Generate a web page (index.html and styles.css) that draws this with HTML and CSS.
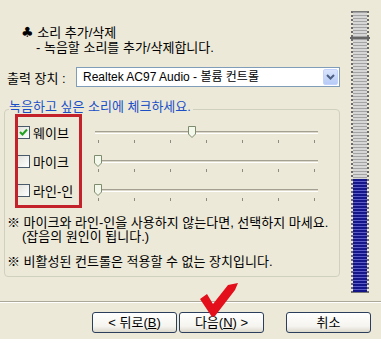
FILE: index.html
```html
<!DOCTYPE html>
<html lang="ko">
<head>
  <meta charset="utf-8" />
  <title>소리 추가/삭제</title>
  <link rel="stylesheet" href="styles.css">
</head>
<body>
  <div class="wizard">
    <div class="main">
      <div class="content">
        <div class="heading">
          <p class="title"><span class="club">♣</span> 소리 추가/삭제</p>
          <p class="subtitle">- 녹음할 소리를 추가/삭제합니다.</p>
        </div>
        <div class="device-row">
          <span class="device-label">출력 장치 :</span>
          <div class="combo">
            <span class="combo-text">Realtek AC97 Audio - 볼륨 컨트롤</span>
            <span class="combo-btn">
              <svg width="9" height="6" viewBox="0 0 9 6"><path d="M1 1 L4.5 4.5 L8 1" fill="none" stroke="#4d6185" stroke-width="2"/></svg>
            </span>
          </div>
        </div>
        <fieldset class="group">
          <legend>녹음하고 싶은 소리에 체크하세요.</legend>
          <div class="sources">
            <div class="source">
              <label class="check">
                <span class="box"><svg width="11" height="11" viewBox="0 0 11 11"><path d="M2 5 L4.5 7.5 L9 2.5" fill="none" stroke="#21a121" stroke-width="2"/></svg></span>웨이브
              </label>
              <div class="slider"><span class="thumb" style="--pos: 0.435"><svg width="8" height="12" viewBox="0 0 8 12"><path d="M0.5 0.5 H7.5 V8 L4 11.5 L0.5 8 Z" fill="#f3f7ec" stroke="#7d8c6c"/></svg></span></div>
            </div>
            <div class="source">
              <label class="check"><span class="box"></span>마이크</label>
              <div class="slider"><span class="thumb" style="--pos: 0"><svg width="8" height="12" viewBox="0 0 8 12"><path d="M0.5 0.5 H7.5 V8 L4 11.5 L0.5 8 Z" fill="#f3f7ec" stroke="#7d8c6c"/></svg></span></div>
            </div>
            <div class="source">
              <label class="check"><span class="box"></span>라인-인</label>
              <div class="slider"><span class="thumb" style="--pos: 0"><svg width="8" height="12" viewBox="0 0 8 12"><path d="M0.5 0.5 H7.5 V8 L4 11.5 L0.5 8 Z" fill="#f3f7ec" stroke="#7d8c6c"/></svg></span></div>
            </div>
            <div class="highlight"></div>
          </div>
          <p class="note">※ 마이크와 라인-인을 사용하지 않는다면, 선택하지 마세요.</p>
          <p class="note indent">(잡음의 원인이 됩니다.)</p>
          <p class="note spaced">※ 비활성된 컨트롤은 적용할 수 없는 장치입니다.</p>
        </fieldset>
      </div>
      <div class="meter">
        <div class="meter-empty"></div>
        <div class="meter-fill"></div>
        <span class="meter-mark"></span>
      </div>
    </div>
    <div class="buttons">
      <button class="btn back">&lt; 뒤로(<u>B</u>)</button>
      <button class="btn next">다음(<u>N</u>) &gt;</button>
      <button class="btn">취소</button>
      <svg class="check-mark" width="40" height="36" viewBox="0 0 40 36"><path d="M1 17 L8 12 L14 22 L29 3 L39 1 L36 8 L16 34 L13 35 Z" fill="#e3101c"/></svg>
    </div>
  </div>
</body>
</html>
```

FILE: styles.css
```css
body {
  margin: 0;
  background-color: #fff;
  font-family: "Liberation Sans", "Noto Sans CJK KR", sans-serif;
  font-size: 13px;
  color: #000;
}
p {
  margin: 0;
}
.wizard {
  width: 381px;
  height: 339px;
  background-color: #ece9d8;
  position: relative;
}
.main {
  display: flex;
  height: 301px;
  border-bottom: 1px solid #aca899;
  box-shadow: 0 1px 0 #fff;
}
.content {
  width: 351px;
}
.heading {
  padding-top: 25px;
  line-height: 15px;
}
.title {
  padding-left: 21px;
}
.club {
  font-family: "DejaVu Sans", sans-serif;
  font-size: 14px;
}
.subtitle {
  padding-left: 36px;
}
.device-row {
  display: flex;
  align-items: center;
  margin-top: 12px;
  padding-left: 7px;
}
.device-label {
  width: 69px;
}
.combo {
  display: flex;
  align-items: center;
  justify-content: space-between;
  box-sizing: border-box;
  width: 264px;
  height: 20px;
  padding: 1px;
  border: 1px solid #7f9db9;
  background-color: #fff;
}
.combo-text {
  padding-left: 5px;
  font-size: 12px;
  line-height: 16px;
}
.combo-btn {
  display: flex;
  align-items: center;
  justify-content: center;
  box-sizing: border-box;
  width: 15px;
  height: 16px;
  border: 1px solid #c3d3fd;
  border-radius: 2px;
  background: linear-gradient(#dae5fc, #b7cbf6);
}
.group {
  box-sizing: border-box;
  width: 336px;
  margin: 13px 0 0 4px;
  padding: 0 0 7px 0;
  border: 1px solid #d0d0bf;
  border-radius: 4px;
}
.group legend {
  margin-left: 4px;
  padding: 0 2px 4px 0;
  line-height: 14px;
  color: #1a4fc8;
}
.sources {
  position: relative;
}
.source {
  display: grid;
  grid-template-columns: 78px 223px;
  height: 29px;
  padding-left: 12px;
}
.check {
  display: flex;
  align-items: center;
  gap: 3px;
}
.box {
  display: flex;
  align-items: center;
  justify-content: center;
  box-sizing: border-box;
  width: 13px;
  height: 13px;
  border: 1px solid #4a5a6a;
  background: linear-gradient(135deg, #e2e2dc, #fff);
}
.slider {
  position: relative;
  background:
    linear-gradient(#a3a091, #a3a091) 0 13px / 100% 1px no-repeat,
    linear-gradient(#dcd9cb, #dcd9cb) 0 14px / 100% 1px no-repeat,
    linear-gradient(#fff, #fff) 0 15px / 100% 1px no-repeat,
    repeating-linear-gradient(to right, #8d8b80 0 1px, transparent 1px 36px) 3px 22px / 217px 3px no-repeat;
}
.thumb {
  position: absolute;
  top: 8px;
  left: calc(var(--pos) * 216px - 1px);
  display: flex;
}
.highlight {
  position: absolute;
  left: 10px;
  top: -4px;
  box-sizing: border-box;
  width: 67px;
  height: 94px;
  border: 3px solid #c4222b;
}
.note {
  padding-left: 2px;
  line-height: 14px;
}
.note:first-of-type {
  margin-top: 11px;
}
.note.indent {
  padding-left: 17px;
}
.note.spaced {
  margin-top: 11px;
}
.meter {
  position: relative;
  display: flex;
  flex-direction: column;
  box-sizing: border-box;
  width: 18px;
  height: 282px;
  margin-top: 11px;
  border-top: 1px solid #7a7a7a;
  border-bottom: 1px solid #7a7a7a;
  border-left: 2px dotted #6a6a6a;
  border-right: 2px dotted #6a6a6a;
}
.meter-empty {
  flex: 1;
  background: repeating-linear-gradient(#a3a3a3 0 1px, #d6d6d6 1px 3px);
}
.meter-fill {
  height: 113px;
  background: repeating-linear-gradient(#15158a 0 2px, #5c5cc8 2px 3px);
}
.meter-mark {
  position: absolute;
  top: 25px;
  left: -3px;
  right: -3px;
  height: 2px;
  background-color: #666;
}
.buttons {
  position: relative;
  display: flex;
  justify-content: flex-end;
  padding: 10px 10px 0 0;
}
.btn {
  box-sizing: border-box;
  width: 85px;
  height: 21px;
  padding: 0;
  border: 1px solid #2b3e5c;
  border-radius: 3px;
  background: linear-gradient(#fff, #f5f4ef 70%, #dcd8cc);
  font-family: "Liberation Sans", "Noto Sans CJK KR", sans-serif;
  font-size: 13px;
  line-height: 19px;
  color: #000;
}
.btn.back {
  margin-right: 2px;
}
.btn.next {
  margin-right: 22px;
}
.check-mark {
  position: absolute;
  left: 199px;
  top: -20px;
}
```
